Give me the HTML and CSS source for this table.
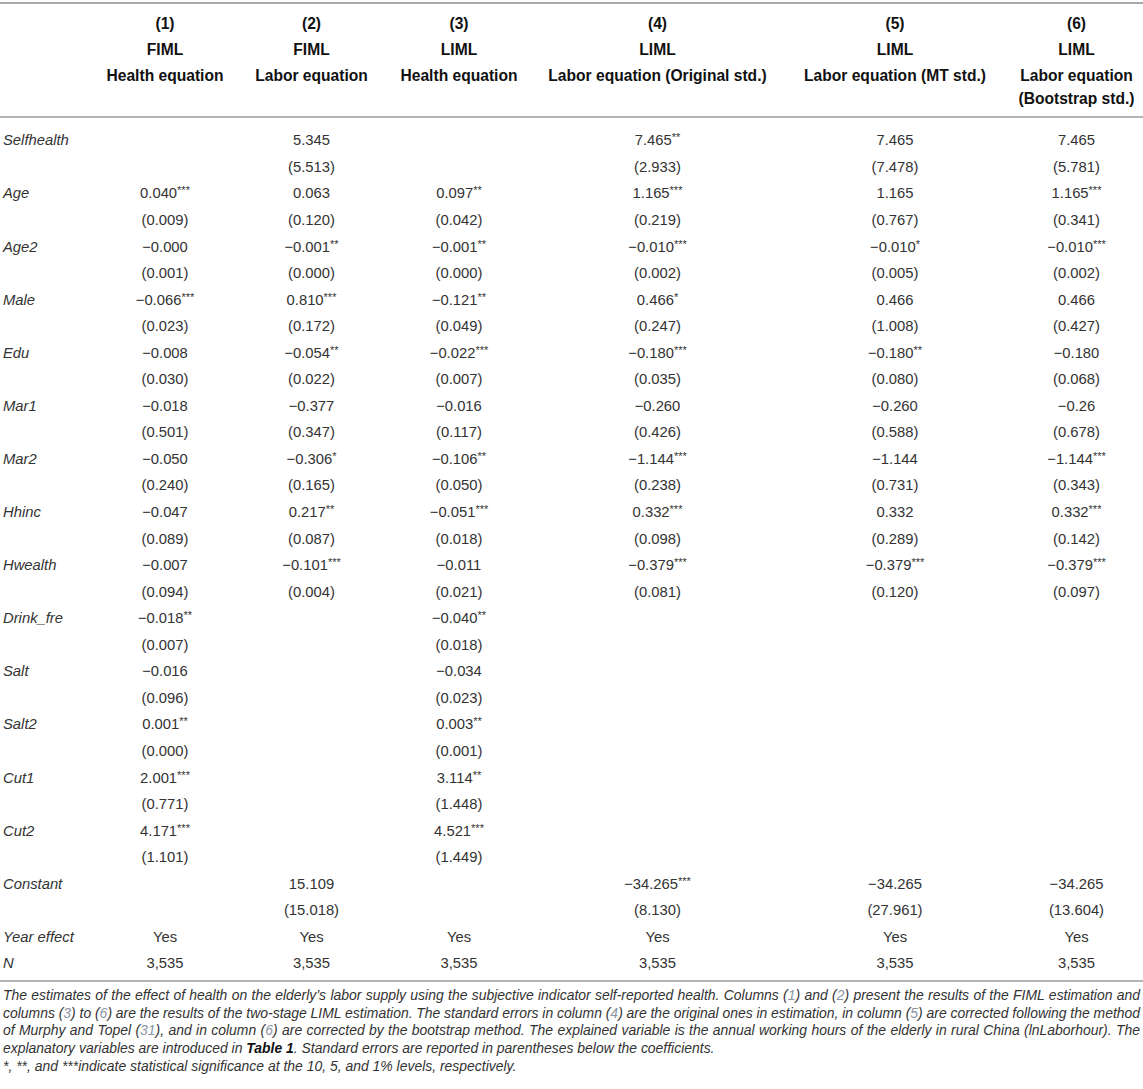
FILE: index.html
```html
<!DOCTYPE html>
<html>
<head>
<meta charset="utf-8">
<link rel="stylesheet" href="styles.css">
</head>
<body>
<table class="results">
  <colgroup>
    <col class="c0"><col class="c1"><col class="c2"><col class="c3"><col class="c4"><col class="c5"><col class="c6">
  </colgroup>
  <thead>
    <tr>
      <th class="lab"></th>
      <th><div class="hl">(1)</div><div class="hl">FIML</div><div class="hl">Health equation</div></th>
      <th><div class="hl">(2)</div><div class="hl">FIML</div><div class="hl">Labor equation</div></th>
      <th><div class="hl">(3)</div><div class="hl">LIML</div><div class="hl">Health equation</div></th>
      <th><div class="hl">(4)</div><div class="hl">LIML</div><div class="hl">Labor equation (Original std.)</div></th>
      <th><div class="hl">(5)</div><div class="hl">LIML</div><div class="hl">Labor equation (MT std.)</div></th>
      <th class="last"><div class="hl">(6)</div><div class="hl">LIML</div><div class="hl">Labor equation (Bootstrap std.)</div></th>
    </tr>
  </thead>
  <tbody>
    <tr class="first"><td class="lab">Selfhealth</td><td></td><td>5.345</td><td></td><td>7.465<sup>**</sup></td><td>7.465</td><td>7.465</td></tr>
    <tr><td class="lab"></td><td></td><td>(5.513)</td><td></td><td>(2.933)</td><td>(7.478)</td><td>(5.781)</td></tr>
    <tr><td class="lab">Age</td><td>0.040<sup>***</sup></td><td>0.063</td><td>0.097<sup>**</sup></td><td>1.165<sup>***</sup></td><td>1.165</td><td>1.165<sup>***</sup></td></tr>
    <tr><td class="lab"></td><td>(0.009)</td><td>(0.120)</td><td>(0.042)</td><td>(0.219)</td><td>(0.767)</td><td>(0.341)</td></tr>
    <tr><td class="lab">Age2</td><td>−0.000</td><td>−0.001<sup>**</sup></td><td>−0.001<sup>**</sup></td><td>−0.010<sup>***</sup></td><td>−0.010<sup>*</sup></td><td>−0.010<sup>***</sup></td></tr>
    <tr><td class="lab"></td><td>(0.001)</td><td>(0.000)</td><td>(0.000)</td><td>(0.002)</td><td>(0.005)</td><td>(0.002)</td></tr>
    <tr><td class="lab">Male</td><td>−0.066<sup>***</sup></td><td>0.810<sup>***</sup></td><td>−0.121<sup>**</sup></td><td>0.466<sup>*</sup></td><td>0.466</td><td>0.466</td></tr>
    <tr><td class="lab"></td><td>(0.023)</td><td>(0.172)</td><td>(0.049)</td><td>(0.247)</td><td>(1.008)</td><td>(0.427)</td></tr>
    <tr><td class="lab">Edu</td><td>−0.008</td><td>−0.054<sup>**</sup></td><td>−0.022<sup>***</sup></td><td>−0.180<sup>***</sup></td><td>−0.180<sup>**</sup></td><td>−0.180</td></tr>
    <tr><td class="lab"></td><td>(0.030)</td><td>(0.022)</td><td>(0.007)</td><td>(0.035)</td><td>(0.080)</td><td>(0.068)</td></tr>
    <tr><td class="lab">Mar1</td><td>−0.018</td><td>−0.377</td><td>−0.016</td><td>−0.260</td><td>−0.260</td><td>−0.26</td></tr>
    <tr><td class="lab"></td><td>(0.501)</td><td>(0.347)</td><td>(0.117)</td><td>(0.426)</td><td>(0.588)</td><td>(0.678)</td></tr>
    <tr><td class="lab">Mar2</td><td>−0.050</td><td>−0.306<sup>*</sup></td><td>−0.106<sup>**</sup></td><td>−1.144<sup>***</sup></td><td>−1.144</td><td>−1.144<sup>***</sup></td></tr>
    <tr><td class="lab"></td><td>(0.240)</td><td>(0.165)</td><td>(0.050)</td><td>(0.238)</td><td>(0.731)</td><td>(0.343)</td></tr>
    <tr><td class="lab">Hhinc</td><td>−0.047</td><td>0.217<sup>**</sup></td><td>−0.051<sup>***</sup></td><td>0.332<sup>***</sup></td><td>0.332</td><td>0.332<sup>***</sup></td></tr>
    <tr><td class="lab"></td><td>(0.089)</td><td>(0.087)</td><td>(0.018)</td><td>(0.098)</td><td>(0.289)</td><td>(0.142)</td></tr>
    <tr><td class="lab">Hwealth</td><td>−0.007</td><td>−0.101<sup>***</sup></td><td>−0.011</td><td>−0.379<sup>***</sup></td><td>−0.379<sup>***</sup></td><td>−0.379<sup>***</sup></td></tr>
    <tr><td class="lab"></td><td>(0.094)</td><td>(0.004)</td><td>(0.021)</td><td>(0.081)</td><td>(0.120)</td><td>(0.097)</td></tr>
    <tr><td class="lab">Drink_fre</td><td>−0.018<sup>**</sup></td><td></td><td>−0.040<sup>**</sup></td><td></td><td></td><td></td></tr>
    <tr><td class="lab"></td><td>(0.007)</td><td></td><td>(0.018)</td><td></td><td></td><td></td></tr>
    <tr><td class="lab">Salt</td><td>−0.016</td><td></td><td>−0.034</td><td></td><td></td><td></td></tr>
    <tr><td class="lab"></td><td>(0.096)</td><td></td><td>(0.023)</td><td></td><td></td><td></td></tr>
    <tr><td class="lab">Salt2</td><td>0.001<sup>**</sup></td><td></td><td>0.003<sup>**</sup></td><td></td><td></td><td></td></tr>
    <tr><td class="lab"></td><td>(0.000)</td><td></td><td>(0.001)</td><td></td><td></td><td></td></tr>
    <tr><td class="lab">Cut1</td><td>2.001<sup>***</sup></td><td></td><td>3.114<sup>**</sup></td><td></td><td></td><td></td></tr>
    <tr><td class="lab"></td><td>(0.771)</td><td></td><td>(1.448)</td><td></td><td></td><td></td></tr>
    <tr><td class="lab">Cut2</td><td>4.171<sup>***</sup></td><td></td><td>4.521<sup>***</sup></td><td></td><td></td><td></td></tr>
    <tr><td class="lab"></td><td>(1.101)</td><td></td><td>(1.449)</td><td></td><td></td><td></td></tr>
    <tr><td class="lab">Constant</td><td></td><td>15.109</td><td></td><td>−34.265<sup>***</sup></td><td>−34.265</td><td>−34.265</td></tr>
    <tr><td class="lab"></td><td></td><td>(15.018)</td><td></td><td>(8.130)</td><td>(27.961)</td><td>(13.604)</td></tr>
    <tr><td class="lab">Year effect</td><td>Yes</td><td>Yes</td><td>Yes</td><td>Yes</td><td>Yes</td><td>Yes</td></tr>
    <tr class="lastrow"><td class="lab">N</td><td>3,535</td><td>3,535</td><td>3,535</td><td>3,535</td><td>3,535</td><td>3,535</td></tr>
  </tbody>
</table>
<div class="notes">
  <p class="main">
    <span class="ln">The estimates of the effect of health on the elderly’s labor supply using the subjective indicator self-reported health. Columns (<span class="ref">1</span>) and (<span class="ref">2</span>) present the results of the FIML estimation and</span>
    <span class="ln">columns (<span class="ref">3</span>) to (<span class="ref">6</span>) are the results of the two-stage LIML estimation. The standard errors in column (<span class="ref">4</span>) are the original ones in estimation, in column (<span class="ref">5</span>) are corrected following the method</span>
    <span class="ln">of Murphy and Topel (<span class="ref">31</span>), and in column (<span class="ref">6</span>) are corrected by the bootstrap method. The explained variable is the annual working hours of the elderly in rural China (lnLaborhour). The</span>
    <span class="ln end">explanatory variables are introduced in <b>Table 1</b>. Standard errors are reported in parentheses below the coefficients.</span>
  </p>
  <p>*, **, and ***indicate statistical significance at the 10, 5, and 1% levels, respectively.</p>
</div>
</body>
</html>
```

FILE: styles.css
```css
html, body {
  margin: 0;
  padding: 0;
  background: #ffffff;
}
body {
  font-family: "Liberation Sans", Arial, Helvetica, sans-serif;
  color: #333333;
}
.results {
  width: 1143px;
  border-collapse: collapse;
  table-layout: fixed;
  margin-top: 2px;
}
.c0 { width: 90px; }
.c1 { width: 150px; }
.c2 { width: 143px; }
.c3 { width: 152px; }
.c4 { width: 245px; }
.c5 { width: 230px; }
.c6 { width: 133px; }

.results thead th {
  border-top: 2px solid #a9a9a9;
  border-bottom: 2px solid #b4b4b4;
  font-size: 15.6px;
  font-weight: bold;
  color: #111111;
  padding: 9px 2px 6px;
  vertical-align: top;
  text-align: center;
}
.results thead th .hl {
  line-height: 22.6px;
  margin-bottom: 3.5px;
}
.results thead th .hl:last-child {
  margin-bottom: 0;
}
.results td {
  font-size: 14.8px;
  line-height: 26.55px;
  height: 26.55px;
  padding: 0 4px;
  text-align: center;
  white-space: nowrap;
  color: #333333;
}
.results td.lab {
  text-align: left;
  font-style: italic;
  padding-left: 3px;
}
.results tr.first td {
  padding-top: 9px;
}
.results tr.lastrow td {
  padding-bottom: 3px;
}
.results tbody tr.lastrow {
  border-bottom: 2px solid #b4b4b4;
}
sup {
  font-size: 11px;
  line-height: 0;
  vertical-align: 4px;
}
.notes {
  padding: 5px 3px 0 3px;
  font-size: 13.95px;
  line-height: 17.7px;
  font-style: italic;
  color: #333333;
}
.notes p {
  margin: 0;
}
.notes .ln {
  display: block;
  text-align: justify;
  text-align-last: justify;
  word-spacing: -0.9px;
}
.notes .ln.end {
  text-align: left;
  text-align-last: left;
  word-spacing: 0;
}
.notes b {
  font-weight: bold;
  color: #111111;
}
.ref {
  color: #8a95a3;
}
```
